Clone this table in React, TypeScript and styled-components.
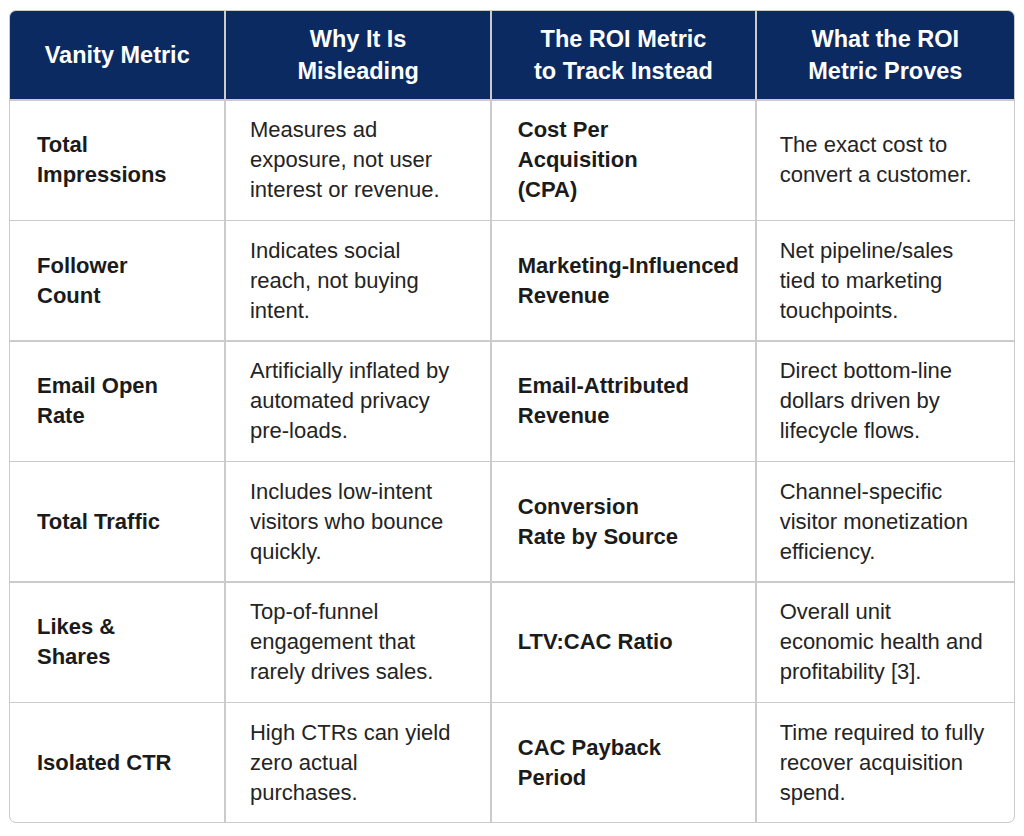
import React from "react";
import styled, { createGlobalStyle } from "styled-components";

const GlobalStyle = createGlobalStyle`
  body {
    margin: 0;
    background: #ffffff;
    font-family: "Liberation Sans", Arial, Helvetica, sans-serif;
  }
`;

const Page = styled.div`
  padding: 10px 9px 11px 9px;
  width: 1024px;
  box-sizing: border-box;
`;

const Table = styled.div`
  display: grid;
  grid-template-columns: 215fr 265fr 264fr 258fr;
  gap: 1.5px;
  background: #cbcbcb;
  border: 1.5px solid #cbcbcb;
  border-radius: 7px;
  overflow: hidden;
`;

const HeadCell = styled.div`
  background: #0c2a62;
  color: #ffffff;
  font-weight: 700;
  font-size: 23.5px;
  line-height: 32px;
  text-align: center;
  display: flex;
  flex-direction: column;
  justify-content: center;
  align-items: center;
  height: 88px;
`;

const Cell = styled.div<{ $inset: number; $strong?: boolean }>`
  background: #ffffff;
  color: ${(p) => (p.$strong ? "#1b1b1b" : "#242424")};
  font-weight: ${(p) => (p.$strong ? 700 : 400)};
  font-size: 22px;
  line-height: 30px;
  padding: 14.5px 12px 14.5px ${(p) => p.$inset}px;
  display: flex;
  flex-direction: column;
  justify-content: center;
  min-height: 90px;
`;

const Line = styled.span`
  display: block;
  white-space: nowrap;
`;

const headers = [
  ["Vanity Metric"],
  ["Why It Is", "Misleading"],
  ["The ROI Metric", "to Track Instead"],
  ["What the ROI", "Metric Proves"],
];

const insets = [27, 24, 26, 23];

const rows: string[][][] = [
  [
    ["Total", "Impressions"],
    ["Measures ad", "exposure, not user", "interest or revenue."],
    ["Cost Per", "Acquisition", "(CPA)"],
    ["The exact cost to", "convert a customer."],
  ],
  [
    ["Follower", "Count"],
    ["Indicates social", "reach, not buying", "intent."],
    ["Marketing-Influenced", "Revenue"],
    ["Net pipeline/sales", "tied to marketing", "touchpoints."],
  ],
  [
    ["Email Open", "Rate"],
    ["Artificially inflated by", "automated privacy", "pre-loads."],
    ["Email-Attributed", "Revenue"],
    ["Direct bottom-line", "dollars driven by", "lifecycle flows."],
  ],
  [
    ["Total Traffic"],
    ["Includes low-intent", "visitors who bounce", "quickly."],
    ["Conversion", "Rate by Source"],
    ["Channel-specific", "visitor monetization", "efficiency."],
  ],
  [
    ["Likes &", "Shares"],
    ["Top-of-funnel", "engagement that", "rarely drives sales."],
    ["LTV:CAC Ratio"],
    ["Overall unit", "economic health and", "profitability [3]."],
  ],
  [
    ["Isolated CTR"],
    ["High CTRs can yield", "zero actual", "purchases."],
    ["CAC Payback", "Period"],
    ["Time required to fully", "recover acquisition", "spend."],
  ],
];

export default function App() {
  return (
    <Page>
      <GlobalStyle />
      <Table>
        {headers.map((h, i) => (
          <HeadCell key={"h" + i}>
            {h.map((l) => (
              <Line key={l}>{l}</Line>
            ))}
          </HeadCell>
        ))}
        {rows.map((row, r) =>
          row.map((cell, c) => (
            <Cell key={r + "-" + c} $inset={insets[c]} $strong={c === 0 || c === 2}>
              {cell.map((l) => (
                <Line key={l}>{l}</Line>
              ))}
            </Cell>
          ))
        )}
      </Table>
    </Page>
  );
}
